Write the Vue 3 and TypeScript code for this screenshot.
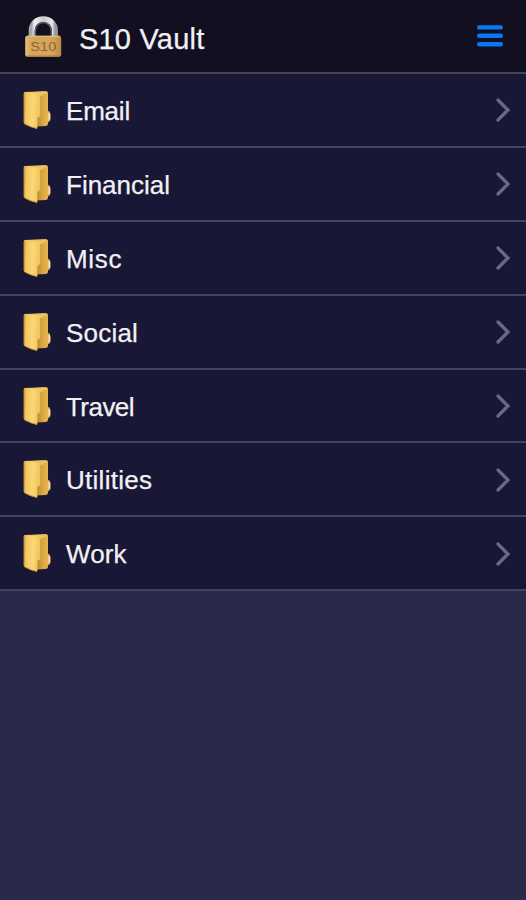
<script setup lang="ts">
interface Folder {
  name: string
  spacing: number
}

const folders: Folder[] = [
  { name: 'Email', spacing: -0.2 },
  { name: 'Financial', spacing: 0 },
  { name: 'Misc', spacing: 0.7 },
  { name: 'Social', spacing: 0.2 },
  { name: 'Travel', spacing: -0.55 },
  { name: 'Utilities', spacing: 0.27 },
  { name: 'Work', spacing: 0.1 },
]
</script>

<template>
  <main class="screen">
    <header class="header">
      <svg class="lock" width="38" height="44" viewBox="0 0 38 44" aria-hidden="true">
        <defs>
          <linearGradient id="steel" x1="0" x2="1" y1="0" y2="0">
            <stop offset="0" stop-color="#a5a7ab" />
            <stop offset="0.12" stop-color="#eff0f2" />
            <stop offset="0.5" stop-color="#c8cacd" />
            <stop offset="0.88" stop-color="#e6e8ea" />
            <stop offset="1" stop-color="#96989c" />
          </linearGradient>
          <linearGradient id="brass" x1="0" x2="1" y1="0" y2="0">
            <stop offset="0" stop-color="#e9bf78" />
            <stop offset="0.15" stop-color="#d6a65e" />
            <stop offset="0.75" stop-color="#d5a45d" />
            <stop offset="1" stop-color="#bd8a44" />
          </linearGradient>
        </defs>
        <path d="M7.7 24V15.5C7.7 8.8 12.6 4.3 19.3 4.3S30.9 8.8 30.9 15.5V24" fill="none" stroke="url(#steel)" stroke-width="6" />
        <path d="M11.4 23V16C11.4 10.9 14.8 7.6 19.3 7.6S27.2 10.9 27.2 16V23" fill="none" stroke="#5c5e65" stroke-width="1.5" />
        <rect x="1.2" y="20.8" width="36" height="21" rx="2.2" fill="url(#brass)" />
        <path d="M3 21.4H35.5" stroke="#e3ba76" stroke-width="1.2" />
        <path d="M3 41.2H35.5" stroke="#b27e38" stroke-width="1.2" />
        <text class="lock-text" x="19.3" y="36" text-anchor="middle" textLength="26" lengthAdjust="spacingAndGlyphs">S10</text>
      </svg>
      <h1 class="title">S10 Vault</h1>
      <svg class="menu" width="26" height="22" viewBox="0 0 26 22" role="img" aria-label="Menu">
        <path d="M2.2 2.4H23.8M2.2 10.8H23.8M2.2 19.2H23.8" stroke="#0879f3" stroke-width="4.4" stroke-linecap="round" />
      </svg>
    </header>

    <ul class="folders">
      <li v-for="folder in folders" :key="folder.name" class="row">
        <svg class="folder" width="28" height="40" viewBox="0 0 28 40" aria-hidden="true">
          <defs>
            <linearGradient id="front" x1="0" x2="1" y1="0" y2="0.1">
              <stop offset="0" stop-color="#dba640" />
              <stop offset="0.2" stop-color="#f2c75f" />
              <stop offset="0.6" stop-color="#fbd876" />
              <stop offset="1" stop-color="#efc45b" />
            </linearGradient>
            <linearGradient id="back" x1="0" x2="1" y1="0" y2="0">
              <stop offset="0.55" stop-color="#c08b30" />
              <stop offset="0.8" stop-color="#dca944" />
              <stop offset="1" stop-color="#e5b54f" />
            </linearGradient>
          </defs>
          <path d="M23 20.8H25.2Q27.4 21.2 27.4 24V29.5Q27.3 31.6 25.5 32.2H23Z" fill="#d8a13d" />
          <path d="M25.4 22.6Q27.2 22.8 27.2 24.6V29.3L25.4 30.8Z" fill="#f5e6c0" />
          <path d="M1 2.4L22.8 1.3Q25 1.4 25 3.4V33.8Q25 35.8 23 35.9L13 36.6Z" fill="url(#back)" />
          <path d="M1.4 2L21.8 1.2Q24 1.2 24.8 2.4L18 6L4 4Z" fill="#edc45f" />
          <path d="M0.8 3Q0.8 1.8 2 1.9L15.6 4Q17.3 4.4 17.3 6.4V25.2Q17.3 26.2 16.2 26.7L14.4 27.9V37.5Q14.4 39 13 38.6Q7 37.2 2.4 34.6Q0.8 33.8 0.8 32.2Z" fill="url(#front)" />
          <path d="M1.2 3.6V32.3Q1.3 33.6 2.6 34.3Q7 36.8 13.1 38.2" fill="none" stroke="#cb9132" stroke-width="0.9" />
        </svg>
        <span class="name" :style="{ letterSpacing: folder.spacing + 'px' }">{{ folder.name }}</span>
        <svg class="chevron" width="16" height="26" viewBox="0 0 16 26" aria-hidden="true">
          <path d="M3 3L13 13L3 23" fill="none" stroke="#6b6987" stroke-width="3.2" stroke-linecap="round" />
        </svg>
      </li>
    </ul>
  </main>
</template>

<style>
body {
  margin: 0;
  background: #2b2949;
}
</style>

<style scoped>
.screen {
  box-sizing: border-box;
  height: 900px;
  overflow: hidden;
  background: #2b2949;
  color: #f1f1f3;
  font-family: "Liberation Sans", Arial, sans-serif;
  -webkit-text-stroke: 0.25px #f1f1f3;
}

.header {
  box-sizing: border-box;
  display: flex;
  align-items: center;
  height: 74px;
  padding: 0 23px 0 24px;
  border-bottom: 2px solid #44415f;
  background: #110f20;
}

.lock {
  flex: none;
  margin-top: 2px;
}

.lock-text {
  fill: #8b6533;
  font-size: 13px;
  -webkit-text-stroke: 0.5px #8b6533;
}

.title {
  flex: 1;
  margin: 5px 0 0 17px;
  font-size: 29px;
  font-weight: 400;
  line-height: 32px;
  letter-spacing: 0.2px;
  white-space: nowrap;
}

.menu {
  flex: none;
}

.folders {
  margin: 0;
  padding: 0;
  list-style: none;
}

.row {
  box-sizing: border-box;
  display: flex;
  align-items: center;
  height: 73.9px;
  padding: 0 15px 0 23px;
  border-bottom: 2px solid #44415f;
  background: #191736;
}

.folder {
  flex: none;
}

.name {
  flex: 1;
  margin: 2px 0 0 15px;
  font-size: 26px;
  line-height: 30px;
}

.chevron {
  flex: none;
  margin-top: 1px;
}
</style>
